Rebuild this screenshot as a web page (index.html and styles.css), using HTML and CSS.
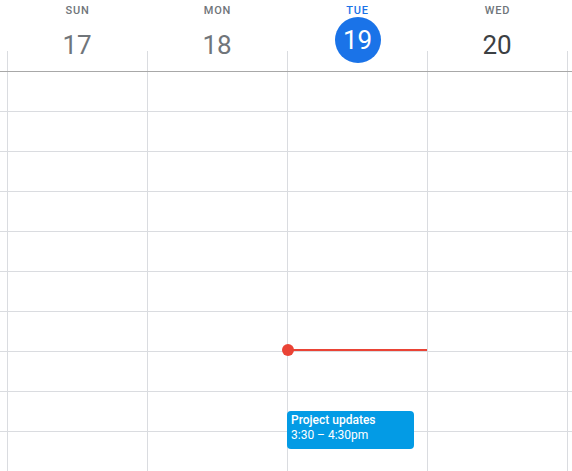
FILE: index.html
```html
<!DOCTYPE html>
<html>
<head>
<meta charset="utf-8">
<link rel="stylesheet" href="styles.css">
</head>
<body>
<div class="cal">
  <div class="head">
    <div class="gutter"></div>
    <div class="day past"><div class="dow">SUN</div><div class="num">17</div></div>
    <div class="day past"><div class="dow">MON</div><div class="num">18</div></div>
    <div class="day today"><div class="dow">TUE</div><div class="num"><span class="circle">19</span></div></div>
    <div class="day"><div class="dow">WED</div><div class="num">20</div></div>
    <div class="day rest"></div>
  </div>
  <div class="grid">
    <div class="row"><div class="gutter"></div><div class="cell"></div><div class="cell"></div><div class="cell"></div><div class="cell"></div><div class="cell"></div></div>
    <div class="row"><div class="gutter"></div><div class="cell"></div><div class="cell"></div><div class="cell"></div><div class="cell"></div><div class="cell"></div></div>
    <div class="row"><div class="gutter"></div><div class="cell"></div><div class="cell"></div><div class="cell"></div><div class="cell"></div><div class="cell"></div></div>
    <div class="row"><div class="gutter"></div><div class="cell"></div><div class="cell"></div><div class="cell"></div><div class="cell"></div><div class="cell"></div></div>
    <div class="row"><div class="gutter"></div><div class="cell"></div><div class="cell"></div><div class="cell"></div><div class="cell"></div><div class="cell"></div></div>
    <div class="row"><div class="gutter"></div><div class="cell"></div><div class="cell"></div><div class="cell"></div><div class="cell"></div><div class="cell"></div></div>
    <div class="row"><div class="gutter"></div><div class="cell"></div><div class="cell"></div><div class="cell now-cell"><div class="now"><span class="now-dot"></span></div></div><div class="cell"></div><div class="cell"></div></div>
    <div class="row"><div class="gutter"></div><div class="cell"></div><div class="cell"></div><div class="cell"></div><div class="cell"></div><div class="cell"></div></div>
    <div class="row"><div class="gutter"></div><div class="cell"></div><div class="cell"></div><div class="cell ev-cell"><div class="event"><div class="ev-title">Project updates</div><div class="ev-time">3:30 – 4:30pm</div></div></div><div class="cell"></div><div class="cell"></div></div>
    <div class="row"><div class="gutter"></div><div class="cell"></div><div class="cell"></div><div class="cell"></div><div class="cell"></div><div class="cell"></div></div>
  </div>
</div>
</body>
</html>
```
FILE: styles.css
```css
* { box-sizing: border-box; }
html, body { margin: 0; padding: 0; background: #fff; }
body { font-family: Roboto, "Liberation Sans", Arial, sans-serif; overflow: hidden; }
.cal { width: 572px; height: 471px; overflow: hidden; }

.head {
  display: grid;
  grid-template-columns: 7px repeat(4, 140px) 1fr;
  height: 72px;
  border-bottom: 1px solid #a8a8a8;
}
.day {
  position: relative;
  text-align: center;
  padding-top: 5px;
}
.day::before {
  content: "";
  position: absolute;
  left: 0;
  bottom: 0;
  width: 1px;
  height: 20px;
  background: #dadce0;
}
.dow {
  font-size: 11px;
  font-weight: 500;
  letter-spacing: 0.8px;
  line-height: 12px;
  color: #70757a;
  padding-left: 1px;
}
.num {
  margin-top: 5px;
  height: 46px;
  display: flex;
  align-items: center;
  justify-content: center;
  font-size: 26px;
  color: #3c4043;
}
.past .num { color: #70757a; }
.today .dow { color: #1a73e8; }
.today .num { margin-top: 0; }
.circle {
  width: 46px;
  height: 46px;
  border-radius: 50%;
  background: #1a73e8;
  color: #fff;
  display: flex;
  align-items: center;
  justify-content: center;
  margin-left: 1px;
}

.grid { display: flex; flex-direction: column; }
.row {
  display: grid;
  grid-template-columns: 7px repeat(4, 140px) 1fr;
  height: 40px;
  border-bottom: 1px solid #dadce0;
}
.cell {
  position: relative;
  border-left: 1px solid #dadce0;
}

.now {
  position: absolute;
  left: 0;
  right: 0;
  top: 37px;
  height: 2px;
  background: #ea4335;
  z-index: 3;
}
.now-dot {
  position: absolute;
  left: -6px;
  top: -5px;
  width: 12px;
  height: 12px;
  border-radius: 50%;
  background: #ea4335;
}

.event {
  position: absolute;
  left: -1px;
  top: 19px;
  width: 127px;
  height: 38px;
  background: #039be5;
  border-radius: 4px;
  color: #fff;
  font-size: 12px;
  line-height: 15px;
  padding: 2px 4px;
  z-index: 2;
}
.ev-title { font-weight: 500; }
```
